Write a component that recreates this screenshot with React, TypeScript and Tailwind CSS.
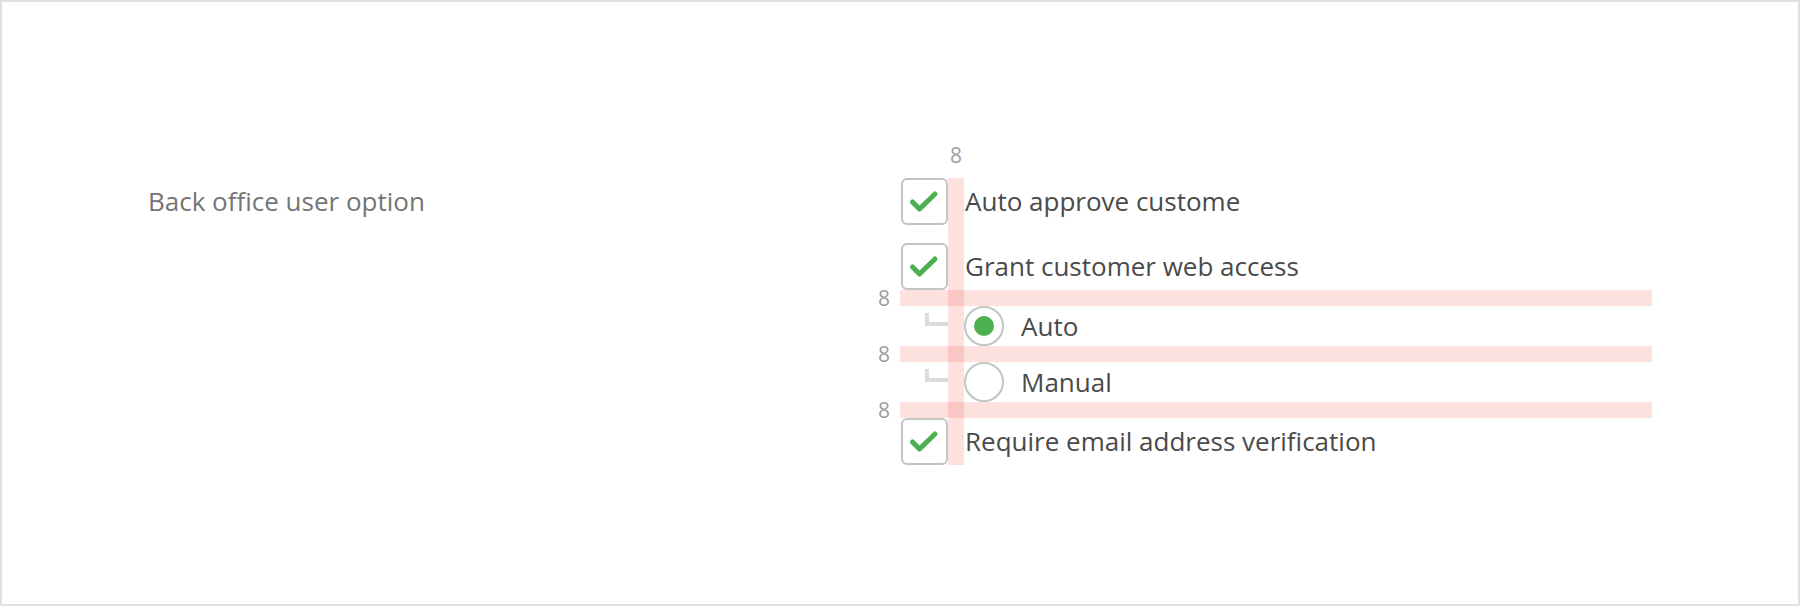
import React from 'react';

const font = { fontFamily: '"Open Sans", "Noto Sans", sans-serif' };

function Checkbox() {
  return (
    <div className="w-[47px] h-[47px] shrink-0 rounded-[6px] border-2 border-[#c4c4c4] bg-white">
      <svg width="43" height="43" viewBox="0 0 43 43" fill="none">
        <polyline
          points="9.5,22 16.5,29 32,14"
          stroke="#4caf50"
          strokeWidth="5"
          strokeLinecap="round"
          strokeLinejoin="round"
        />
      </svg>
    </div>
  );
}

function Radio({ checked }: { checked?: boolean }) {
  return (
    <div className="w-[40px] h-[40px] shrink-0 rounded-full border-2 border-[#c4c4c4] bg-white flex items-center justify-center">
      {checked && <div className="w-[20px] h-[20px] rounded-full bg-[#4caf50]" />}
    </div>
  );
}

function CheckRow({ label }: { label: string }) {
  return (
    <div className="flex items-center gap-[17px] h-[47px]">
      <Checkbox />
      <span className="text-[26px] text-[#4a4a4a] whitespace-nowrap">{label}</span>
    </div>
  );
}

function RadioRow({ label, checked }: { label: string; checked?: boolean }) {
  return (
    <div className="flex items-center h-[40px] pl-[24px]">
      <div className="w-[23px] h-[13px] -mt-[13px] border-l-[4px] border-b-[4px] border-[#dcdcdc]" />
      <div className="w-[16px]" />
      <Radio checked={checked} />
      <span className="ml-[17px] text-[26px] text-[#4a4a4a] whitespace-nowrap">{label}</span>
    </div>
  );
}

export default function App() {
  return (
    <div style={font} className="w-[1800px] h-[606px] border-2 border-[#e0e0e0] bg-white flex pt-[176px]">
      <div className="w-[899px] shrink-0 pl-[146px] h-[47px] flex items-center">
        <span className="text-[26px] text-[#757575]">Back office user option</span>
      </div>

      <div className="relative flex flex-col">
        <div className="flex flex-col gap-[18px]">
          <CheckRow label="Auto approve custome" />
          <CheckRow label="Grant customer web access" />
        </div>
        <div className="flex flex-col gap-[16px] pt-[16px] pb-[16px]">
          <RadioRow label="Auto" checked />
          <RadioRow label="Manual" />
        </div>
        <CheckRow label="Require email address verification" />

        {/* spacing annotations */}
        <div className="absolute left-[47px] top-0 w-[16px] h-[287px] bg-[rgba(244,67,54,0.16)]" />
        <div className="absolute -left-[1px] top-[112px] w-[752px] h-[16px] bg-[rgba(244,67,54,0.16)]" />
        <div className="absolute -left-[1px] top-[168px] w-[752px] h-[16px] bg-[rgba(244,67,54,0.16)]" />
        <div className="absolute -left-[1px] top-[224px] w-[752px] h-[16px] bg-[rgba(244,67,54,0.16)]" />

        <div className="absolute left-[47px] -top-[31px] w-[16px] h-[16px] flex items-center justify-center text-[21px] leading-none text-[#9e9e9e]">8</div>
        <div className="absolute -left-[41px] top-[112px] w-[30px] h-[16px] flex items-center justify-end text-[21px] leading-none text-[#9e9e9e]">8</div>
        <div className="absolute -left-[41px] top-[168px] w-[30px] h-[16px] flex items-center justify-end text-[21px] leading-none text-[#9e9e9e]">8</div>
        <div className="absolute -left-[41px] top-[224px] w-[30px] h-[16px] flex items-center justify-end text-[21px] leading-none text-[#9e9e9e]">8</div>
      </div>
    </div>
  );
}
